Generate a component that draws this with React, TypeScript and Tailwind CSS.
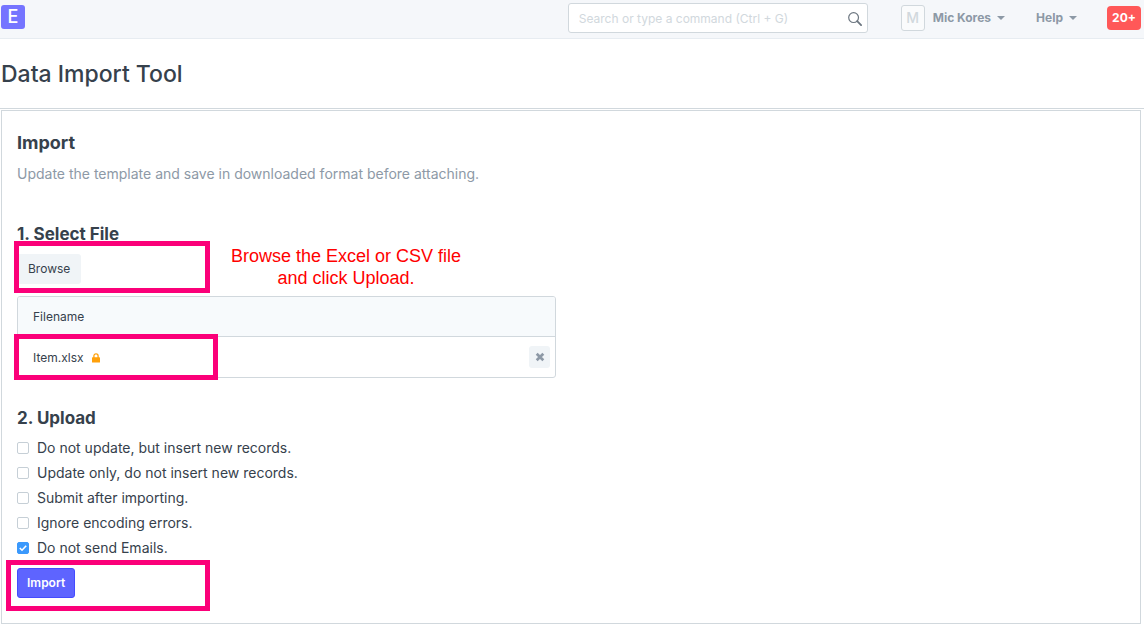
import { useState } from "react";

const uploadOptions = [
  { id: "insert-only", label: "Do not update, but insert new records.", checked: false },
  { id: "update-only", label: "Update only, do not insert new records.", checked: false },
  { id: "submit-after", label: "Submit after importing.", checked: false },
  { id: "ignore-encoding", label: "Ignore encoding errors.", checked: false },
  { id: "no-emails", label: "Do not send Emails.", checked: true },
];

function Caret() {
  return (
    <svg width="8" height="4" viewBox="0 0 8 4" fill="currentColor" aria-hidden="true">
      <path d="M0 0h8L4 4z" />
    </svg>
  );
}

function SearchIcon() {
  return (
    <svg width="14" height="14" viewBox="0 0 14 14" fill="none" stroke="currentColor" aria-hidden="true">
      <circle cx="5.6" cy="5.6" r="4.9" strokeWidth="1.2" />
      <path d="M9.2 9.2l3.9 3.9" strokeWidth="1.8" strokeLinecap="round" />
    </svg>
  );
}

function LockIcon() {
  return (
    <svg width="8" height="10" viewBox="0 0 8 10" aria-hidden="true">
      <path d="M1.9 5V2.9a2.1 2.1 0 0 1 4.2 0V5" fill="none" stroke="#ffa00a" strokeWidth="1.3" />
      <rect y="4.3" width="8" height="5.2" rx="0.6" fill="#ffa00a" />
    </svg>
  );
}

function CloseIcon() {
  return (
    <svg width="10" height="10" viewBox="0 0 10 10" fill="none" stroke="currentColor" aria-hidden="true">
      <path d="M1.7 1.7l6.6 6.6M8.3 1.7L1.7 8.3" strokeWidth="2.7" />
    </svg>
  );
}

function CheckOption({ id, label, initial }: { id: string; label: string; initial: boolean }) {
  const [checked, setChecked] = useState(initial);
  return (
    <div className="flex h-[25px] items-center gap-2">
      <span className="relative flex">
        <input
          id={id}
          type="checkbox"
          checked={checked}
          onChange={(e) => setChecked(e.target.checked)}
          className="size-3 appearance-none rounded-[2px] border border-[#c6cfd6] bg-white checked:border-[#3b99fc] checked:bg-[#3b99fc]"
        />
        {checked && (
          <svg
            className="pointer-events-none absolute inset-0"
            width="12"
            height="12"
            viewBox="0 0 12 12"
            fill="none"
            stroke="white"
            strokeWidth="1.6"
            aria-hidden="true"
          >
            <path d="M2.8 6l2.2 2.2 4.2-4.4" />
          </svg>
        )}
      </span>
      <label htmlFor={id} className="text-sm leading-5">
        {label}
      </label>
    </div>
  );
}

export default function App() {
  return (
    <div className="bg-white font-['Inter','Liberation_Sans',sans-serif] text-[#36414c]">
      <header className="flex items-start justify-between border-b border-[#e7ecf1] bg-[#f5f7fa] pr-[3px] pl-px">
        <a
          href="#home"
          className="mt-[5px] flex size-6 items-center justify-center rounded-[3px] bg-[#7574ff] text-lg leading-6 font-medium text-white"
        >
          E
        </a>
        <div className="flex h-[38px] items-start pt-[3px]">
          <div className="relative w-[300px]">
            <input
              type="search"
              aria-label="Search"
              placeholder="Search or type a command (Ctrl + G)"
              className="block h-[30px] w-full rounded-[3px] border border-[#d1d8dd] bg-white pr-8 pl-2.5 text-xs placeholder:text-[#d1d8dd]"
            />
            <span className="pointer-events-none absolute top-[9px] right-1.5 text-[#6c7680]">
              <SearchIcon />
            </span>
          </div>
          <button type="button" className="ml-[33px] flex h-[30px] items-center gap-2 text-xs font-bold text-[#8d99a6]">
            <span className="flex h-[26px] w-6 items-center justify-center rounded-[3px] border border-[#d1d8dd] bg-[#fafbfc] text-sm font-medium text-[#d1d8dd]">
              M
            </span>
            <span className="flex items-center gap-1.5">
              Mic Kores <Caret />
            </span>
          </button>
          <button type="button" className="ml-[31px] flex h-[30px] items-center gap-1.5 text-xs font-bold text-[#8d99a6]">
            Help <Caret />
          </button>
          <div className="ml-[30px] flex h-[30px] items-center">
            <button type="button" className="h-6 w-[34px] rounded-[4px] bg-[#ff5858] text-center text-xs font-bold text-white">
              20+
            </button>
          </div>
        </div>
      </header>

      <div className="border-b border-[#d1d8dd] px-px pt-[19px] pb-[18px]">
        <h1 className="text-[23px] leading-8 font-medium">Data Import Tool</h1>
      </div>

      <main className="mt-px mr-[3px] ml-px border border-[#d1d8dd] px-[15px] pt-[22px] pb-[25px]">
        <h2 className="text-lg leading-5 font-bold">Import</h2>
        <p className="mt-[11px] text-sm leading-5 text-[#8d99a6]">
          Update the template and save in downloaded format before attaching.
        </p>

        <section className="mt-10">
          <h3 className="text-[17px] leading-5 font-bold">1. Select File</h3>
          <div className="relative mt-2.5">
            <button type="button" className="block h-[30px] rounded-[3px] bg-[#f0f4f7] px-[11px] text-xs">
              Browse
            </button>
            <div className="pointer-events-none absolute -top-[13px] -left-[3px] h-[52px] w-[196px] border-5 border-[#fb0079]" />
            <p className="absolute -top-[9px] left-[214px] text-center font-['Liberation_Sans',sans-serif] text-lg leading-[22px] whitespace-nowrap text-[#ff0000]">
              Browse the Excel or CSV file
              <br />
              and click Upload.
            </p>
          </div>

          <div className="relative mt-3 w-[539px] max-w-full">
            <table className="w-full border-separate border-spacing-0 overflow-hidden rounded-[3px] border border-[#d1d8dd] text-xs">
              <thead>
                <tr className="h-10 bg-[#f7fafc]">
                  <th colSpan={2} className="border-b border-[#d1d8dd] px-[15px] text-left font-normal">
                    Filename
                  </th>
                </tr>
              </thead>
              <tbody>
                <tr className="h-10">
                  <td className="pt-px pl-[15px]">
                    <span className="flex items-center gap-2">
                      Item.xlsx <LockIcon />
                    </span>
                  </td>
                  <td className="pr-[5px]">
                    <button
                      type="button"
                      aria-label="Remove file"
                      className="ml-auto flex h-[22px] w-[21px] items-center justify-center rounded-[3px] bg-[#f0f4f7] text-[#8d99a6]"
                    >
                      <CloseIcon />
                    </button>
                  </td>
                </tr>
              </tbody>
            </table>
            <div className="pointer-events-none absolute top-[38px] -left-[3px] h-[46px] w-[204px] border-5 border-[#fb0079]" />
          </div>
        </section>

        <section className="mt-[30px]">
          <h3 className="text-[17px] leading-5 font-bold">2. Upload</h3>
          <div className="mt-[7px]">
            {uploadOptions.map((o) => (
              <CheckOption key={o.id} id={o.id} label={o.label} initial={o.checked} />
            ))}
          </div>
          <div className="relative mt-2">
            <button
              type="button"
              className="block h-[30px] rounded-[3px] border border-[#444bff] bg-[#5e64ff] px-[9px] text-xs font-semibold text-white"
            >
              Import
            </button>
            <div className="pointer-events-none absolute -top-2 -left-[11px] h-[51px] w-[204px] border-5 border-[#fb0079]" />
          </div>
        </section>
      </main>
    </div>
  );
}
